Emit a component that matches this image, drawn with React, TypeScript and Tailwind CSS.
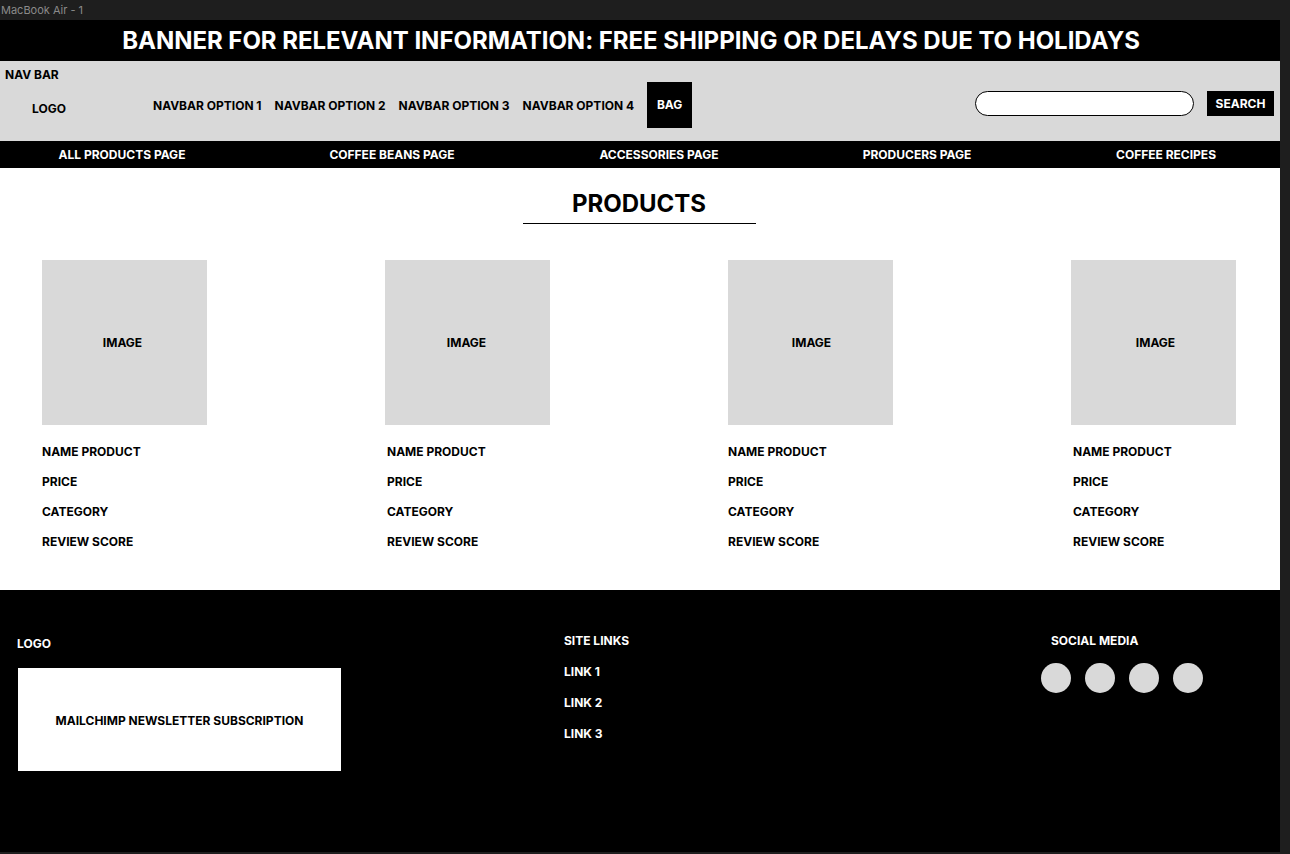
const navOptions = ["NAVBAR OPTION 1", "NAVBAR OPTION 2", "NAVBAR OPTION 3", "NAVBAR OPTION 4"];

const pages = [
    { label: "ALL PRODUCTS PAGE", w: "w-[244px]" },
    { label: "COFFEE BEANS PAGE", w: "w-[296px]" },
    { label: "ACCESSORIES PAGE", w: "w-[238px]" },
    { label: "PRODUCERS PAGE", w: "w-[278px]" },
    { label: "COFFEE RECIPES", w: "w-[220px]" },
];

// small offsets copied from the mockup, the labels are not perfectly aligned there
const products = [
    { id: 1, shift: false, label: "pr-[4px]" },
    { id: 2, shift: true, label: "pr-[2px]" },
    { id: 3, shift: false, label: "pl-[2px]" },
    { id: 4, shift: true, label: "pl-[4px]" },
];

function ProductCard({ shift, label }: { shift: boolean; label: string }) {
    return (
        <div className="w-[165px] flex flex-col">
            <div className={["w-[165px] h-[165px] bg-[#d9d9d9] flex items-center justify-center text-[12px] font-bold text-black", label].join(" ")}>
                IMAGE
            </div>
            <div className={["mt-[19px] flex flex-col gap-[15px] text-[12px] leading-[15px] font-bold text-black", shift ? "ml-[2px]" : ""].join(" ")}>
                <span>NAME PRODUCT</span>
                <span>PRICE</span>
                <span>CATEGORY</span>
                <span>REVIEW SCORE</span>
            </div>
        </div>
    );
}

export default function App() {
    return (
        <div className="w-[1290px] h-[854px] bg-[#1e1e1e] overflow-hidden font-['Inter',sans-serif]">
            <div className="h-5 pl-px text-[11px] leading-5 text-[#8a8a8a]">MacBook Air - 1</div>

            <div className="w-[1280px]">
                {/* banner */}
                <div className="h-[41px] bg-black flex items-center justify-center pr-[18px]">
                    <span className="text-white text-[24px] font-bold leading-none tracking-[-0.03px]">
                        BANNER FOR RELEVANT INFORMATION: FREE SHIPPING OR DELAYS DUE TO HOLIDAYS
                    </span>
                </div>

                {/* nav */}
                <div className="h-[80px] bg-[#d9d9d9] flex flex-col">
                    <div className="h-[21px] pl-[5px] pt-[7px] text-[12px] leading-[14px] font-bold text-black">NAV BAR</div>
                    <div className="h-[46px] flex items-center">
                        <span className="pl-[32px] w-[153px] mt-[7px] text-[12px] font-bold text-black">LOGO</span>
                        <div className="flex items-center gap-[13px] mt-[1px]">
                            {navOptions.map((o) => (
                                <span key={o} className="text-[12px] font-bold text-black whitespace-nowrap">{o}</span>
                            ))}
                        </div>
                        <div className="ml-[13px] w-[45px] h-[46px] bg-black flex items-center justify-center text-white text-[12px] font-bold">
                            BAG
                        </div>
                        <div className="ml-auto mr-[6px] flex items-center gap-[13px] -mt-[3px]">
                            <div className="w-[219px] h-[25px] rounded-full bg-white border border-black" />
                            <div className="w-[67px] h-[25px] bg-black flex items-center justify-center text-white text-[12px] font-bold">
                                SEARCH
                            </div>
                        </div>
                    </div>
                </div>

                {/* page links */}
                <div className="h-[27px] bg-black flex items-center pr-[4px]">
                    {pages.map((p) => (
                        <div key={p.label} className={[p.w, "text-center text-white text-[12px] font-bold"].join(" ")}>
                            {p.label}
                        </div>
                    ))}
                </div>

                {/* products */}
                <div className="h-[422px] bg-white flex flex-col">
                    <div className="flex flex-col items-center pt-[21px] pr-[2px]">
                        <h1 className="text-[24px] leading-[29px] font-bold text-black">PRODUCTS</h1>
                        <div className="mt-[5px] w-[233px] h-px bg-black" />
                    </div>
                    <div className="mt-[36px] pl-[42px] flex gap-[178px]">
                        {products.map((p) => (
                            <ProductCard key={p.id} shift={p.shift} label={p.label} />
                        ))}
                    </div>
                </div>

                {/* footer */}
                <div className="h-[262px] bg-black flex text-white">
                    <div className="w-[564px] pl-[17px] pt-[46px] flex flex-col">
                        <span className="text-[12px] leading-[15px] font-bold">LOGO</span>
                        <div className="mt-[17px] ml-px w-[323px] h-[103px] bg-white flex items-center justify-center pt-[3px] text-black text-[12px] font-bold">
                            MAILCHIMP NEWSLETTER SUBSCRIPTION
                        </div>
                    </div>
                    <div className="w-[477px] pt-[43px] flex flex-col gap-[16px] text-[12px] leading-[15px] font-bold">
                        <span>SITE LINKS</span>
                        <span>LINK 1</span>
                        <span>LINK 2</span>
                        <span>LINK 3</span>
                    </div>
                    <div className="pt-[43px] flex flex-col">
                        <span className="ml-[10px] text-[12px] leading-[15px] font-bold">SOCIAL MEDIA</span>
                        <div className="mt-[15px] flex gap-[14px]">
                            {[1, 2, 3, 4].map((i) => (
                                <div key={i} className="w-[30px] h-[30px] rounded-full bg-[#d9d9d9]" />
                            ))}
                        </div>
                    </div>
                </div>
            </div>
        </div>
    );
}
